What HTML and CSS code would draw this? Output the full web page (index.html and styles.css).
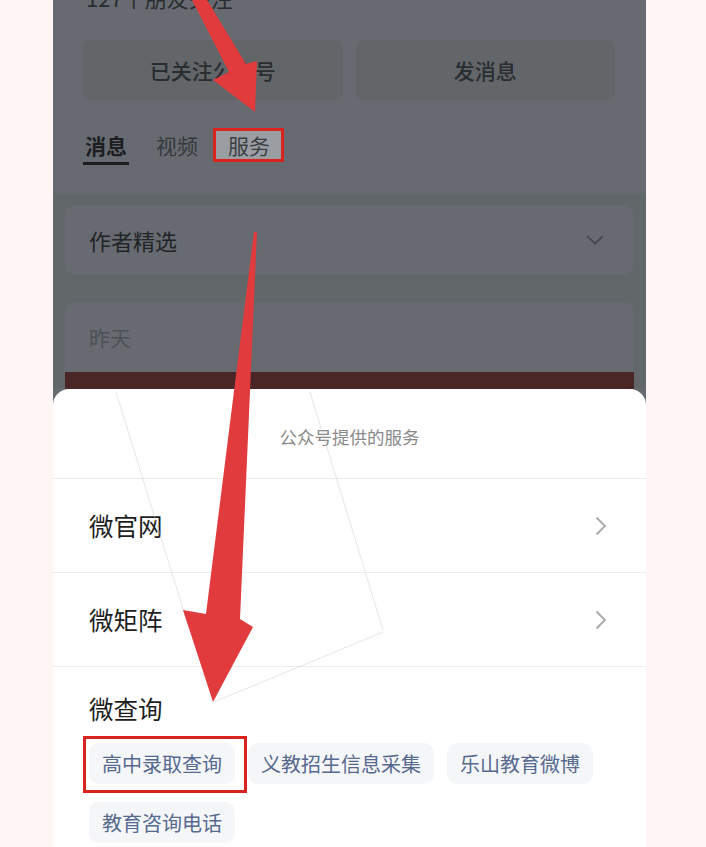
FILE: index.html
```html
<!DOCTYPE html>
<html lang="zh-CN">
<head>
    <meta charset="UTF-8">
    <meta name="viewport" content="width=device-width, initial-scale=1.0">
    <title>公众号提供的服务</title>
    <link rel="stylesheet" href="styles.css">
</head>
<body>
    <div class="phone">
        <div class="profile">
            <div class="follow">127个朋友关注</div>
            <div class="actions">
                <div class="btn">已关注公众号</div>
                <div class="btn">发消息</div>
            </div>
            <div class="tabs">
                <span class="tab active">消息</span>
                <span class="tab">视频</span>
                <span class="tab marked">服务</span>
            </div>
        </div>

        <div class="feed">
            <div class="card picks">
                <span>作者精选</span>
                <svg class="chev-down" width="18" height="10" viewBox="0 0 18 10"><polyline points="1,1 9,8.5 17,1" fill="none" stroke="#464a4e" stroke-width="1.8"/></svg>
            </div>
            <div class="card day">
                <div class="day-label">昨天</div>
                <div class="cover"></div>
            </div>
        </div>

        <!-- 底部弹出的服务面板 -->
        <div class="sheet">
            <div class="sheet-title">公众号提供的服务</div>
            <div class="row">
                <span>微官网</span>
                <svg class="chev" width="12" height="20" viewBox="0 0 12 20"><polyline points="1.5,1.5 10,10 1.5,18.5" fill="none" stroke="#a9a9a9" stroke-width="1.8"/></svg>
            </div>
            <div class="row">
                <span>微矩阵</span>
                <svg class="chev" width="12" height="20" viewBox="0 0 12 20"><polyline points="1.5,1.5 10,10 1.5,18.5" fill="none" stroke="#a9a9a9" stroke-width="1.8"/></svg>
            </div>
            <div class="group">
                <div class="group-title">微查询</div>
                <div class="chips">
                    <span class="chip boxed">高中录取查询</span>
                    <span class="chip">义教招生信息采集</span>
                    <span class="chip">乐山教育微博</span>
                    <span class="chip">教育咨询电话</span>
                </div>
            </div>
        </div>
    </div>

    <!-- 标注用的箭头 -->
    <svg class="marks" width="706" height="847" viewBox="0 0 706 847">
        <g stroke="#c8c8c8" stroke-opacity="0.45" stroke-width="1" fill="none">
            <line x1="116" y1="392" x2="188" y2="625"/>
            <line x1="310" y1="392" x2="383" y2="630"/>
            <line x1="383" y1="632" x2="214" y2="702"/>
        </g>
        <polygon points="192,0 207,0 246,64 257,61 255,112 213,80 229,72" fill="#e13b3d"/>
        <polygon points="254,232 257,232 240,619 253,627 213,702 183,610 206,614" fill="#e13b3d"/>
    </svg>
</body>
</html>
```

FILE: styles.css
```css
:root {
    --dim-bg: #676b71;
    --dim-deep: #62676a;
    --mark-red: #d8231f;
    --chip-text: #56698f;
}
* { box-sizing: border-box; }
body {
    margin: 0;
    height: 847px;
    overflow: hidden;
    background: #fff5f4;
    font-family: "Noto Sans CJK SC", "Noto Sans", sans-serif;
    position: relative;
}
.phone {
    margin-left: 53px;
    width: 593px;
    height: 847px;
    overflow: hidden;
    display: flex;
    flex-direction: column;
    background: var(--dim-bg);
}
.profile {
    padding: 0 31px 28px 30px;
}
.follow {
    margin-top: -18px;
    font-size: 22px;
    line-height: 30px;
    color: #2a2d30;
    padding-left: 3px;
}
.actions {
    display: flex;
    gap: 13px;
    margin-top: 28px;
}
.btn {
    flex: 1;
    height: 60px;
    background: #626668;
    border-radius: 8px;
    display: flex;
    align-items: center;
    justify-content: center;
    font-size: 21px;
    font-weight: 500;
    color: #2a2d30;
}
.tabs {
    display: flex;
    align-items: flex-start;
    gap: 27px;
    margin-top: 28px;
}
.tab {
    font-size: 21px;
    line-height: 34px;
    color: #36393c;
}
.tab.active {
    padding: 0 2px;
    font-weight: 700;
    color: #1c1e20;
    border-bottom: 3px solid #1c1e20;
}
.tab.marked {
    margin-left: -12px;
    padding: 0 11px 0 12px;
    line-height: 28px;
    background: #9a9ea3;
    border: 3px solid var(--mark-red);
    color: #3a3d41;
}
.feed {
    background: var(--dim-deep);
    padding: 12px 12px 0;
    display: flex;
    flex-direction: column;
    gap: 27px;
}
.card {
    background: var(--dim-bg);
    border-radius: 10px;
}
.picks {
    height: 70px;
    display: flex;
    align-items: center;
    justify-content: space-between;
    padding: 0 30px 0 24px;
    font-size: 22px;
    color: #222426;
}
.day {
    border-radius: 10px 10px 0 0;
    overflow: hidden;
}
.day-label {
    height: 70px;
    line-height: 70px;
    padding-left: 24px;
    font-size: 21px;
    color: #4e5256;
}
.cover {
    height: 17px;
    background: #4a2626;
}
.sheet {
    flex: 1;
    background: #fff;
    border-radius: 16px 16px 0 0;
}
.sheet-title {
    padding: 36px 0 29px;
    line-height: 24px;
    text-align: center;
    font-size: 17.5px;
    color: #8a8a8a;
    border-bottom: 1px solid #ececec;
}
.row {
    height: 94px;
    display: flex;
    align-items: center;
    justify-content: space-between;
    padding: 0 39px 0 36px;
    font-size: 24.5px;
    color: #1e1e1e;
    border-bottom: 1px solid #ececec;
}
.group {
    padding: 27px 39px 0 36px;
}
.group-title {
    font-size: 24.5px;
    line-height: 30px;
    color: #1e1e1e;
}
.chips {
    display: flex;
    flex-wrap: wrap;
    gap: 18px 13px;
    margin-top: 19px;
}
.chip {
    position: relative;
    height: 41px;
    line-height: 41px;
    padding: 0 13px;
    border-radius: 10px;
    background: #f5f6f8;
    font-size: 20px;
    color: var(--chip-text);
}
.chip.boxed::after {
    content: "";
    position: absolute;
    top: -7px;
    left: -6px;
    right: -12px;
    bottom: -9px;
    border: 3px solid var(--mark-red);
}
.marks {
    position: absolute;
    top: 0;
    left: 0;
    pointer-events: none;
}
```
